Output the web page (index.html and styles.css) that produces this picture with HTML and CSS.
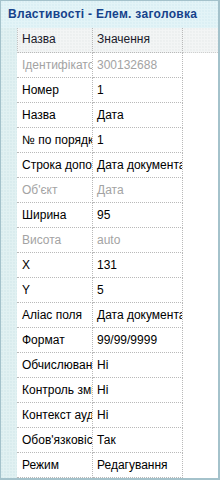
FILE: index.html
```html
<!DOCTYPE html>
<html lang="uk">
<head>
<meta charset="utf-8">
<title>Властивості</title>
<link rel="stylesheet" href="styles.css">
</head>
<body>
<div class="panel">
  <div class="title">Властивості - Елем. заголовка</div>
  <div class="grid">
    <div class="row head">
      <div class="gut"></div>
      <div class="c1">Назва</div>
      <div class="c2">Значення</div>
      <div class="fill"></div>
    </div>
    <div class="row dis"><div class="gut"></div><div class="c1">Ідентифікатор</div><div class="c2">300132688</div><div class="fill"></div></div>
    <div class="row"><div class="gut"></div><div class="c1">Номер</div><div class="c2">1</div><div class="fill"></div></div>
    <div class="row"><div class="gut"></div><div class="c1">Назва</div><div class="c2">Дата</div><div class="fill"></div></div>
    <div class="row"><div class="gut"></div><div class="c1">№ по порядку</div><div class="c2">1</div><div class="fill"></div></div>
    <div class="row"><div class="gut"></div><div class="c1">Строка допомоги</div><div class="c2">Дата документа</div><div class="fill"></div></div>
    <div class="row dis"><div class="gut"></div><div class="c1">Об'єкт</div><div class="c2">Дата</div><div class="fill"></div></div>
    <div class="row"><div class="gut"></div><div class="c1">Ширина</div><div class="c2">95</div><div class="fill"></div></div>
    <div class="row dis"><div class="gut"></div><div class="c1">Висота</div><div class="c2">auto</div><div class="fill"></div></div>
    <div class="row"><div class="gut"></div><div class="c1">X</div><div class="c2">131</div><div class="fill"></div></div>
    <div class="row"><div class="gut"></div><div class="c1">Y</div><div class="c2">5</div><div class="fill"></div></div>
    <div class="row"><div class="gut"></div><div class="c1">Аліас поля</div><div class="c2">Дата документа</div><div class="fill"></div></div>
    <div class="row"><div class="gut"></div><div class="c1">Формат</div><div class="c2">99/99/9999</div><div class="fill"></div></div>
    <div class="row"><div class="gut"></div><div class="c1">Обчислюване</div><div class="c2">Ні</div><div class="fill"></div></div>
    <div class="row"><div class="gut"></div><div class="c1">Контроль змін</div><div class="c2">Ні</div><div class="fill"></div></div>
    <div class="row"><div class="gut"></div><div class="c1">Контекст аудиту</div><div class="c2">Ні</div><div class="fill"></div></div>
    <div class="row"><div class="gut"></div><div class="c1">Обов'язковість</div><div class="c2">Так</div><div class="fill"></div></div>
    <div class="row"><div class="gut"></div><div class="c1">Режим</div><div class="c2">Редагування</div><div class="fill"></div></div>
  </div>
</div>
</body>
</html>
```
FILE: styles.css
```css
html, body {
  margin: 0;
  padding: 0;
  background: #ffffff;
}
.panel {
  box-sizing: border-box;
  width: 220px;
  height: 480px;
  border-style: solid;
  border-color: #a4c2cb;
  border-width: 1px 2px 2px 1px;
  display: flex;
  flex-direction: column;
  font-family: "Liberation Sans", Arial, sans-serif;
  font-size: 12px;
  color: #000;
  overflow: hidden;
}
.title {
  flex: none;
  height: 27px;
  line-height: 27px;
  padding-left: 7px;
  font-weight: bold;
  letter-spacing: 0.3px;
  color: #15428b;
  background-color: #e3f4f7;
  background-image: radial-gradient(circle at 1px 1px, #d2eaef 0.6px, transparent 0.8px);
  background-size: 3px 3px;
  white-space: nowrap;
}
.grid {
  flex: 1;
  display: flex;
  flex-direction: column;
  background: linear-gradient(to right, #dff0f1 16px, #ffffff 16px);
}
.row {
  flex: none;
  display: flex;
  height: 25px;
  line-height: 24px;
}
.gut {
  width: 16px;
  flex: none;
  background-color: #e1f1f2;
  background-image: radial-gradient(circle at 1px 1px, #cfe6e8 0.6px, transparent 0.8px);
  background-size: 3px 3px;
}
.c1, .c2 {
  flex: none;
  box-sizing: border-box;
  height: 25px;
  padding-left: 5px;
  white-space: nowrap;
  overflow: hidden;
  border-bottom: 1px dotted #b9b9b9;
  border-right: 1px dotted #b9b9b9;
}
.c1 {
  width: 76px;
}
.c2 {
  width: 90px;
  padding-left: 4px;
}
.fill {
  flex: 1;
}
.head {
  line-height: 23px;
  background-color: #f3f5f5;
  background-image: radial-gradient(circle at 1px 1px, #e4e8e8 0.6px, transparent 0.8px);
  background-size: 3px 3px;
}
.head .c1 {
  border-left: 1px dotted #c4c4c4;
  padding-left: 4px;
}
.head .c1, .head .c2 {
  color: #1a1a2a;
}
.head .fill {
  border-bottom: 1px dotted #cfcfcf;
}
.dis .c1, .dis .c2 {
  color: #a3a3a3;
}
```
